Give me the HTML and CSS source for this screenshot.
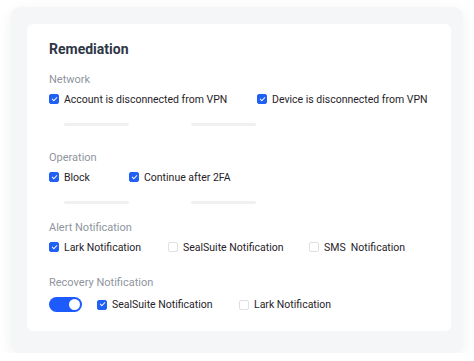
FILE: index.html
```html
<!DOCTYPE html>
<html>
<head>
<meta charset="utf-8">
<link rel="stylesheet" href="styles.css">
</head>
<body>
<div class="panel">
  <div class="card">
    <h1 class="title">Remediation</h1>

    <div class="label l-net">Network</div>
    <div class="row">
      <label class="opt w1"><span class="cb on"></span>Account is disconnected from VPN</label>
      <label class="opt"><span class="cb on"></span>Device is disconnected from VPN</label>
    </div>
    <div class="bars"><span class="bar"></span><span class="bar"></span></div>

    <div class="label l-op">Operation</div>
    <div class="row">
      <label class="opt w2"><span class="cb on"></span>Block</label>
      <label class="opt"><span class="cb on"></span>Continue after 2FA</label>
    </div>
    <div class="bars"><span class="bar"></span><span class="bar"></span></div>

    <div class="label l-alert">Alert Notification</div>
    <div class="row">
      <label class="opt w3"><span class="cb on"></span>Lark Notification</label>
      <label class="opt w4"><span class="cb"></span>SealSuite Notification</label>
      <label class="opt"><span class="cb"></span>SMS&nbsp; Notification</label>
    </div>

    <div class="label l-rec">Recovery Notification</div>
    <div class="row r-last">
      <span class="toggle"><span class="knob"></span></span>
      <label class="opt w5"><span class="cb on"></span>SealSuite Notification</label>
      <label class="opt"><span class="cb"></span>Lark Notification</label>
    </div>
  </div>
</div>
</body>
</html>
```

FILE: styles.css
```css
html, body {
  margin: 0;
  padding: 0;
  background: #ffffff;
}
body {
  padding: 7px 11px 0 11px;
  font-family: Roboto, "Liberation Sans", sans-serif;
}
.panel {
  background: #f5f6f8;
  border-radius: 10px;
  padding: 17px 12px 22px 16px;
  box-shadow: 0 4px 14px rgba(30, 40, 60, 0.07);
}
.card {
  background: #ffffff;
  border-radius: 6px;
  padding: 15px 22px 19px;
}
.title {
  margin: 0;
  font-size: 14px;
  line-height: 20px;
  font-weight: 700;
  color: #2f3747;
  font-family: Roboto, "Liberation Sans", sans-serif;
}
.label {
  font-size: 11px;
  line-height: 14px;
  color: #8f959e;
}
.l-net { margin-top: 14px; }
.l-op { margin-top: 25px; }
.l-alert { margin-top: 17px; }
.l-rec { margin-top: 22px; }
.row {
  display: flex;
  align-items: center;
  margin-top: 5px;
  height: 14px;
}
.row.r-last {
  margin-top: 7px;
  height: 15px;
}
.opt {
  display: flex;
  align-items: center;
  flex: none;
  font-size: 10.5px;
  color: #1f2329;
  white-space: nowrap;
}
.w1 { width: 208px; }
.w2 { width: 80px; }
.w3 { width: 119px; }
.w4 { width: 141px; }
.w5 { width: 142px; }
.cb {
  width: 8px;
  height: 8px;
  border: 1px solid #dee0e3;
  border-radius: 2px;
  margin-right: 5px;
  flex: none;
  box-sizing: content-box;
  background: #fff;
  position: relative;
}
.cb.on {
  background: #2160f5;
  border-color: #2160f5;
}
.cb.on::after {
  content: "";
  position: absolute;
  left: 2.6px;
  top: 0.8px;
  width: 2px;
  height: 4.2px;
  border: solid #fff;
  border-width: 0 1.2px 1.2px 0;
  transform: rotate(45deg);
}
.bars {
  display: flex;
  gap: 62px;
  padding-left: 15px;
  margin-top: 17px;
}
.bar {
  width: 65px;
  height: 3px;
  border-radius: 2px;
  background: #eef0f2;
}
.toggle {
  width: 33px;
  height: 15px;
  border-radius: 8px;
  background: #1e5bff;
  margin-right: 15px;
  position: relative;
  flex: none;
}
.knob {
  position: absolute;
  right: 2px;
  top: 2px;
  width: 11px;
  height: 11px;
  border-radius: 50%;
  background: #fff;
}
```
